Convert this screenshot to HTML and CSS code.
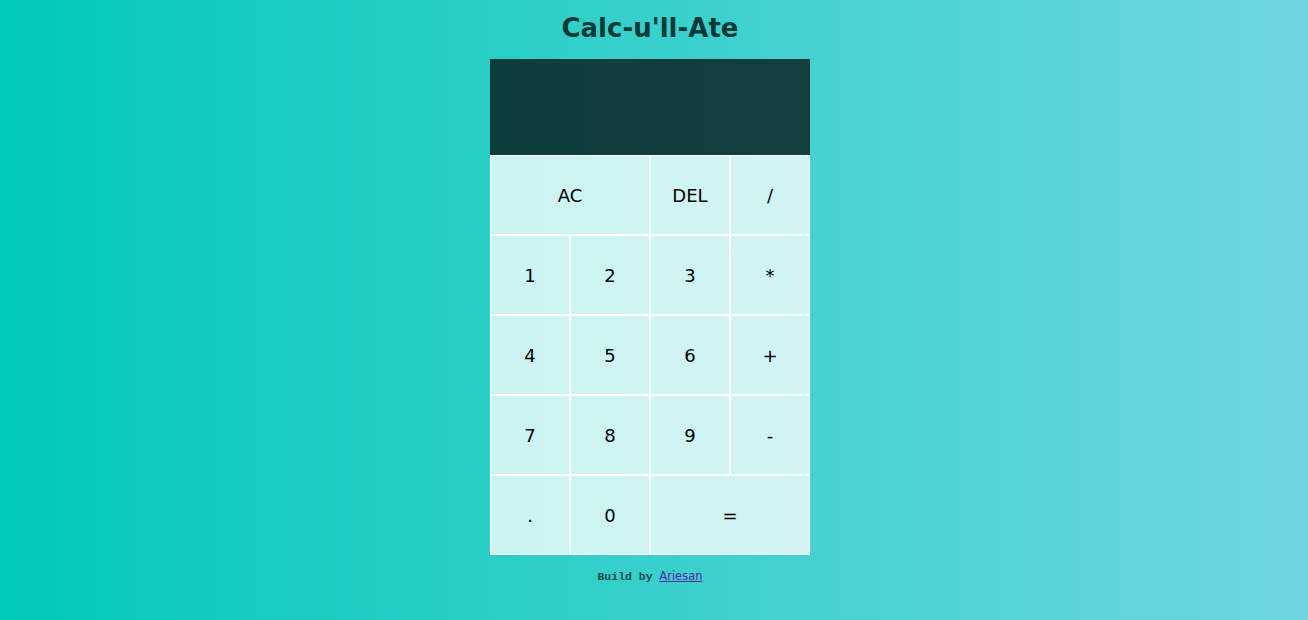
FILE: index.html
```html
<!DOCTYPE html>
<html>
<head>
<meta charset="utf-8">
<title>Calc-u'll-Ate</title>
<link rel="stylesheet" href="styles.css">
</head>
<body>
<h1 class="title">Calc-u'll-Ate</h1>
<div class="calc">
  <div class="display"></div>
  <button class="key span-two">AC</button>
  <button class="key">DEL</button>
  <button class="key">/</button>
  <button class="key">1</button>
  <button class="key">2</button>
  <button class="key">3</button>
  <button class="key">*</button>
  <button class="key">4</button>
  <button class="key">5</button>
  <button class="key">6</button>
  <button class="key">+</button>
  <button class="key">7</button>
  <button class="key">8</button>
  <button class="key">9</button>
  <button class="key">-</button>
  <button class="key">.</button>
  <button class="key">0</button>
  <button class="key span-two">=</button>
</div>
<p class="footer"><span class="build">Build by</span> <a class="link" href="#">Ariesan</a></p>
</body>
</html>
```
FILE: styles.css
```css
html, body {
  margin: 0;
  padding: 0;
  height: 100%;
}
body {
  box-sizing: border-box;
  padding-right: 8px;
  background: linear-gradient(to right, #00c9b8, #6fd7e0);
  font-family: "DejaVu Sans", Verdana, sans-serif;
  display: flex;
  flex-direction: column;
  align-items: center;
}
.title {
  margin: 12px 0 15px;
  font-size: 26px;
  line-height: 32px;
  font-weight: bold;
  color: #0a3a38;
}
.calc {
  display: grid;
  grid-template-columns: repeat(4, 80px);
  grid-template-rows: 96px repeat(5, 80px);
}
.display {
  grid-column: 1 / -1;
  background: rgba(0, 0, 0, 0.7);
}
.key {
  margin: 0;
  padding: 0;
  border: 1px solid #ffffff;
  background: rgba(255, 255, 255, 0.76);
  font-family: "DejaVu Sans", Verdana, sans-serif;
  font-size: 18px;
  color: #000;
  cursor: pointer;
  outline: none;
}
.span-two {
  grid-column: span 2;
}
.footer {
  margin: 13px 0 0;
  font-size: 11.5px;
  line-height: 16px;
}
.build {
  font-family: "Liberation Mono", "Courier New", monospace;
  font-weight: bold;
  color: #1e4a48;
}
.link {
  margin-left: 3px;
  font-family: "DejaVu Sans", Verdana, sans-serif;
  font-size: 11.5px;
  color: #5a24a8;
}
```
